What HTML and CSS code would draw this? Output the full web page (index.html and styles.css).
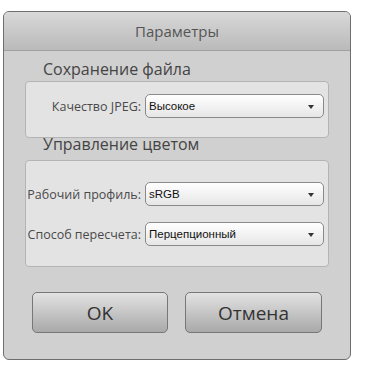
FILE: index.html
```html
<!DOCTYPE html>
<html lang="ru">
<head>
  <meta charset="UTF-8" />
  <title>Параметры</title>
  <link rel="stylesheet" href="styles.css">
</head>
<body>

  <div class="dialog">
    <div class="dialog-header">Параметры</div>

    <div class="dialog-body">
      <div class="section-title first">Сохранение файла</div>
      <div class="group group-save">
        <div class="row">
          <span class="label">Качество JPEG:</span>
          <div class="select"><span>Высокое</span><i class="arrow"></i></div>
        </div>
      </div>

      <div class="section-title second">Управление цветом</div>
      <div class="group group-color">
        <div class="row">
          <span class="label">Рабочий профиль:</span>
          <div class="select"><span>sRGB</span><i class="arrow"></i></div>
        </div>
        <div class="row">
          <span class="label">Способ пересчета:</span>
          <div class="select"><span>Перцепционный</span><i class="arrow"></i></div>
        </div>
      </div>

      <div class="buttons">
        <button class="button">OK</button>
        <button class="button">Отмена</button>
      </div>
    </div>
  </div>

</body>
</html>
```

FILE: styles.css
```css
html, body {
  margin: 0;
  padding: 0;
  background: #fff;
  font-family: 'Open Sans', 'DejaVu Sans', sans-serif;
}

.dialog {
  margin: 11px 0 0 3px;
  width: 348px;
  height: 349px;
  box-sizing: border-box;
  border: 1px solid #6e6e6e;
  border-radius: 6px;
  background: #d0d0d0;
  overflow: hidden;
}

.dialog-header {
  height: 38px;
  line-height: 38px;
  text-align: center;
  font-size: 15px;
  color: #555;
  background: linear-gradient(to bottom, #d8d8d8, #bababa);
  border-bottom: 1px solid #a0a0a0;
}

.dialog-body {
  padding: 0 21px;
}

.section-title {
  font-size: 16px;
  line-height: 16px;
  color: #444;
  padding-left: 18px;
}

.section-title.first {
  margin-top: 10px;
  margin-bottom: 4px;
}

.section-title.second {
  margin-top: -2px;
  margin-bottom: 8px;
}

.group {
  background: #e3e3e3;
  border: 1px solid #b4b4b4;
  border-radius: 4px;
  display: flex;
  flex-direction: column;
  gap: 16px;
  padding-right: 4px;
}

.group-save {
  padding-top: 12px;
  padding-bottom: 19px;
}

.group-color {
  padding-top: 21px;
  padding-bottom: 20px;
}

.row {
  display: flex;
  align-items: center;
  gap: 4px;
}

.label {
  width: 115px;
  text-align: right;
  font-size: 12.5px;
  color: #4a4a4a;
  white-space: nowrap;
}

.select {
  flex: 1;
  height: 24px;
  box-sizing: border-box;
  border: 1px solid #8a8a8a;
  border-radius: 5px;
  background: linear-gradient(to bottom, #ffffff, #e6e6e6);
  display: flex;
  align-items: center;
  justify-content: space-between;
  padding: 0 9px 0 3px;
  font-family: 'Liberation Sans', Arial, sans-serif;
  font-size: 11.5px;
  color: #111;
}

.arrow {
  width: 0;
  height: 0;
  border-left: 3.5px solid transparent;
  border-right: 3.5px solid transparent;
  border-top: 4px solid #333;
  margin-top: 2px;
}

.buttons {
  display: flex;
  gap: 17px;
  padding-left: 7px;
  margin-top: 25px;
}

.button {
  width: 136px;
  height: 41px;
  border: 1px solid #777;
  border-radius: 5px;
  background: linear-gradient(to bottom, #e2e2e2, #a9a9a9);
  font-family: 'Open Sans', 'DejaVu Sans', sans-serif;
  font-size: 19px;
  color: #333;
  padding: 0;
}

.button + .button {
  width: 137px;
}
```
